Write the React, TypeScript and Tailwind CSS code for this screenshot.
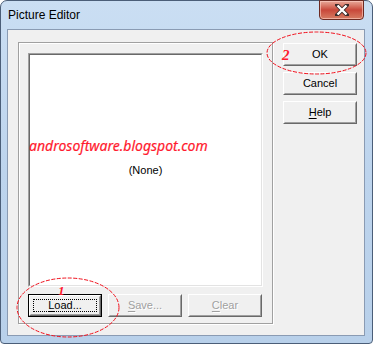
import React from "react";

const sans = { fontFamily: '"Liberation Sans", Arial, sans-serif' };

function Btn({
  label,
  u,
  rest,
  disabled,
  focused,
  w = "w-[74px]",
}: {
  label?: string;
  u?: string;
  rest?: string;
  disabled?: boolean;
  focused?: boolean;
  w?: string;
}) {
  const text = (
    <span
      className={`text-[11px] leading-none ${disabled ? "text-[#a0a0a0] [text-shadow:1px_1px_0_#fff]" : "text-black"}`}
      style={sans}
    >
      {u ? <span className="underline underline-offset-2">{u}</span> : null}
      {rest ?? label}
    </span>
  );
  const inner = (
    <div className="h-full w-full border border-t-[#ffffff] border-l-[#ffffff] border-r-[#696969] border-b-[#696969] bg-[#f0f0f0]">
      <div className="h-full w-full border border-t-[#f0f0f0] border-l-[#f0f0f0] border-r-[#a0a0a0] border-b-[#a0a0a0] flex items-center justify-center">
        {focused ? (
          <div className="h-[calc(100%-4px)] w-[calc(100%-4px)] border border-dotted border-black flex items-center justify-center">
            {text}
          </div>
        ) : (
          text
        )}
      </div>
    </div>
  );
  return (
    <div className={`${w} h-[23px] ${focused ? "border border-black" : ""}`}>{inner}</div>
  );
}

export default function App() {
  return (
    <div className="relative w-[373px] h-[344px] overflow-hidden bg-white">
      <div className="absolute inset-0 rounded-t-[7px] rounded-b-[4px] border border-[#4b5e78] bg-gradient-to-b from-[#cadef3] via-[#bdd4ed] to-[#b8d0ea] flex flex-col">
        {/* title bar */}
        <div className="relative h-[28px] flex items-start shrink-0">
          <div className="pl-[7px] pt-[8px] text-[12px] leading-none text-black" style={sans}>
            Picture Editor
          </div>
          <div className="absolute left-[318px] top-[-1px] w-[45px] h-[20px] rounded-b-[4px] border border-[#6d2a22] bg-gradient-to-b from-[#e7a99a] via-[#c8473a] to-[#d67b63] flex items-center justify-center shadow-[inset_0_0_0_1px_rgba(255,210,200,0.6)]">
            <svg width="14" height="12" viewBox="0 0 14 12">
              <path
                d="M2 1 L12 11 M12 1 L2 11"
                stroke="#3a2a2a"
                strokeWidth="4"
                strokeLinecap="square"
                fill="none"
              />
              <path d="M2.5 1.5 L11.5 10.5 M11.5 1.5 L2.5 10.5" stroke="#ffffff" strokeWidth="2.4" fill="none" />
            </svg>
          </div>
        </div>
        {/* client area */}
        <div className="ml-[6px] mr-[7px] h-[307px] border border-[#8a9bb3] bg-[#f0f0f0] flex pt-[12px] pl-[10px]">
          {/* group box */}
          <div className="w-[255px] h-[282px] border border-[#a0a0a0] shadow-[inset_1px_1px_0_#fff,1px_1px_0_#fff] pt-[10px] pl-[9px] flex flex-col">
            <div className="w-[235px] h-[234px] border border-t-[#a0a0a0] border-l-[#a0a0a0] border-r-[#ffffff] border-b-[#ffffff]">
              <div className="h-full w-full border border-t-[#696969] border-l-[#696969] border-r-[#e3e3e3] border-b-[#e3e3e3] bg-white flex flex-col items-center pt-[110px]">
                <span className="text-[11px] leading-none text-black" style={sans}>
                  (None)
                </span>
              </div>
            </div>
            <div className="flex gap-[6px] mt-[7px]">
              <Btn u="L" rest="oad..." focused />
              <Btn u="S" rest="ave..." disabled />
              <Btn u="C" rest="lear" disabled />
            </div>
          </div>
          {/* right buttons */}
          <div className="ml-[10px] flex flex-col gap-[6px] pt-[1px]">
            <Btn label="OK" />
            <Btn label="Cancel" />
            <Btn u="H" rest="elp" />
          </div>
        </div>
      </div>

      {/* watermark */}
      <div
        className="absolute left-[29px] top-[139px] text-[14px] italic leading-none text-[#ff1a2e] [-webkit-text-stroke:0.2px_#ff1a2e]"
        style={{ fontFamily: '"Noto Sans", "Open Sans", sans-serif' }}
      >
        androsoftware.blogspot.com
      </div>

      {/* annotations */}
      <svg className="absolute inset-0 pointer-events-none" width="373" height="344">
        <ellipse cx="68" cy="307.5" rx="51" ry="29.5" fill="none" stroke="#f0101c" strokeWidth="1" strokeDasharray="4 1.5" />
        <ellipse cx="316.5" cy="53" rx="49.5" ry="21" fill="none" stroke="#f0101c" strokeWidth="1" strokeDasharray="4 1.5" />
      </svg>
      <div
        className="absolute left-[58px] top-[284px] text-[13px] font-bold italic leading-none text-[#ff1a2e]"
        style={{ fontFamily: '"Liberation Serif", serif' }}
      >
        1
      </div>
      <div
        className="absolute left-[282px] top-[48px] text-[15px] font-bold italic leading-none text-[#ff1a2e]"
        style={{ fontFamily: '"Liberation Serif", serif' }}
      >
        2
      </div>
    </div>
  );
}
